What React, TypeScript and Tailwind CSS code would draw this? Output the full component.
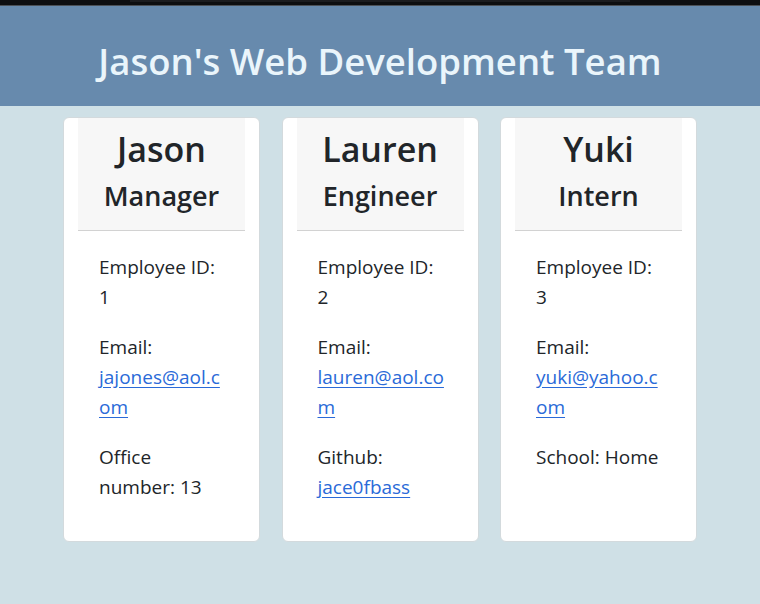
import React from "react";

type Emp = {
  name: string;
  role: string;
  id: string;
  email: string;
  extraLabel: string;
  extraValue: string;
  extraLink?: boolean;
};

const team: Emp[] = [
  { name: "Jason", role: "Manager", id: "1", email: "jajones@aol.com", extraLabel: "Office number:", extraValue: "13" },
  { name: "Lauren", role: "Engineer", id: "2", email: "lauren@aol.com", extraLabel: "Github:", extraValue: "jace0fbass", extraLink: true },
  { name: "Yuki", role: "Intern", id: "3", email: "yuki@yahoo.com", extraLabel: "School:", extraValue: "Home" },
];

function Card({ e }: { e: Emp }) {
  return (
    <div className="flex w-[197px] flex-col rounded-[6px] border border-[#d3dadd] bg-white">
      <div className="mx-[14px] border-b border-[#d2d2d2] bg-[#f7f7f7] px-2 pt-[11px] pb-[10px] text-center text-[#212529]">
        <h2 className="mb-[10px] text-[34px] font-semibold leading-[1.2]">{e.name}</h2>
        <h3 className="mb-[8px] text-[27px] font-semibold leading-[1.2]">{e.role}</h3>
      </div>
      <div className="pl-[35px] pr-[31px] pt-[21px] pb-[19px] text-[19px] leading-[30px] text-[#212529]">
        <p className="mb-[20px]">
          Employee ID:
          <br />
          {e.id}
        </p>
        <p className="mb-[20px]">
          Email:
          <br />
          <a href="#" className="break-all text-[#2a6ad8] underline underline-offset-[3px]">
            {e.email}
          </a>
        </p>
        <p className="mb-[20px]">
          {e.extraLink ? (
            <>
              {e.extraLabel}
              <br />
              <a href="#" className="text-[#2a6ad8] underline underline-offset-[3px]">
                {e.extraValue}
              </a>
            </>
          ) : (
            <>
              {e.extraLabel} {e.extraValue}
            </>
          )}
        </p>
      </div>
    </div>
  );
}

export default function App() {
  return (
    <div
      className="min-h-screen bg-[#cfe0e6]"
      style={{ fontFamily: '"Open Sans", "Noto Sans", sans-serif' }}
    >
      <div className="box-content flex h-[5px] justify-center border-b border-[#4b5056] bg-[#0d0e10]">
        <div className="h-[2px] w-[500px] bg-[#1b1c1f]" />
      </div>
      <header className="flex h-[100px] items-center justify-center bg-[#678aad] pt-[11px]">
        <h1 className="text-[36.5px] font-semibold text-[#eaf5fb]">Jason's Web Development Team</h1>
      </header>
      <main className="flex justify-center gap-[21.5px] pt-[11px]">
        {team.map((e) => (
          <Card key={e.id} e={e} />
        ))}
      </main>
    </div>
  );
}
